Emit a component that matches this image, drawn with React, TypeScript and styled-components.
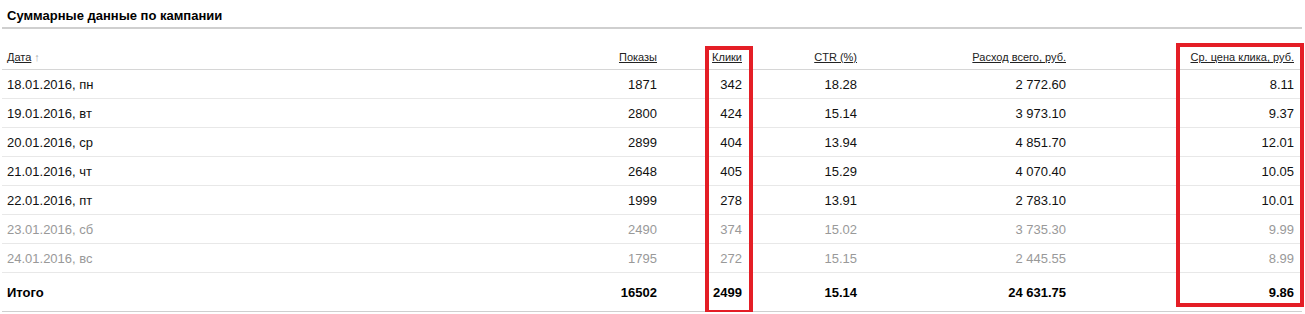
import * as React from 'react';
import styled, { createGlobalStyle } from 'styled-components';

const GlobalStyle = createGlobalStyle`
    body {
        margin: 0;
        background: #fff;
        font-family: "Liberation Sans", Arial, sans-serif;
        color: #000;
    }
`;

const Panel = styled.div`
    position: relative;
    width: 1300px;
    margin-left: 2px;
`;

const Title = styled.h2`
    margin: 0;
    height: 29px;
    padding-left: 5px;
    box-sizing: border-box;
    padding-top: 8px;
    font-size: 13px;
    font-weight: bold;
    line-height: 15px;
    border-bottom: 2px solid #cfcfcf;
`;

const Table = styled.table`
    width: 1300px;
    table-layout: fixed;
    border-collapse: collapse;
    font-size: 13px;
`;

const HeadCell = styled.th<{ $left?: boolean }>`
    height: 34px;
    padding: ${p => (p.$left ? '0 0 6px 5px' : '0 8px 6px 0')};
    vertical-align: bottom;
    text-align: ${p => (p.$left ? 'left' : 'right')};
    font-weight: normal;
    font-size: 11px;
    border-bottom: 1px solid #d6d6d6;
`;

const SortLink = styled.a`
    color: #222;
    text-decoration: underline;
    cursor: pointer;
`;

const Arrow = styled.span`
    color: #aaa;
    margin-left: 3px;
`;

const Row = styled.tr<{ $muted?: boolean }>`
    color: ${p => (p.$muted ? '#999' : '#111')};
`;

const Cell = styled.td<{ $left?: boolean }>`
    height: 28px;
    padding: ${p => (p.$left ? '0 0 0 5px' : '0 8px 0 0')};
    text-align: ${p => (p.$left ? 'left' : 'right')};
    border-bottom: 1px solid #e8e8e8;
    white-space: nowrap;
`;

const TotalCell = styled(Cell)`
    height: 38px;
    font-weight: bold;
    color: #000;
    border-bottom: 1px solid #cfcfcf;
`;

const Marker = styled.div<{ $left: number; $top: number; $w: number; $h: number }>`
    position: absolute;
    left: ${p => p.$left}px;
    top: ${p => p.$top}px;
    width: ${p => p.$w}px;
    height: ${p => p.$h}px;
    box-sizing: border-box;
    border: 4px solid #e41e26;
    pointer-events: none;
`;

const columns = [
    { title: 'Дата', width: 498 },
    { title: 'Показы', width: 165 },
    { title: 'Клики', width: 85 },
    { title: 'CTR (%)', width: 115 },
    { title: 'Расход всего, руб.', width: 209 },
    { title: 'Ср. цена клика, руб.', width: 228 },
];

const rows = [
    { date: '18.01.2016, пн', shows: '1871', clicks: '342', ctr: '18.28', cost: '2 772.60', cpc: '8.11' },
    { date: '19.01.2016, вт', shows: '2800', clicks: '424', ctr: '15.14', cost: '3 973.10', cpc: '9.37' },
    { date: '20.01.2016, ср', shows: '2899', clicks: '404', ctr: '13.94', cost: '4 851.70', cpc: '12.01' },
    { date: '21.01.2016, чт', shows: '2648', clicks: '405', ctr: '15.29', cost: '4 070.40', cpc: '10.05' },
    { date: '22.01.2016, пт', shows: '1999', clicks: '278', ctr: '13.91', cost: '2 783.10', cpc: '10.01' },
    { date: '23.01.2016, сб', shows: '2490', clicks: '374', ctr: '15.02', cost: '3 735.30', cpc: '9.99', weekend: true },
    { date: '24.01.2016, вс', shows: '1795', clicks: '272', ctr: '15.15', cost: '2 445.55', cpc: '8.99', weekend: true },
];

export default function App() {
    return (
        <Panel>
            <GlobalStyle />
            <Title>Суммарные данные по кампании</Title>
            <Table>
                <colgroup>
                    {columns.map(c => (
                        <col key={c.title} style={{ width: c.width }} />
                    ))}
                </colgroup>
                <thead>
                    <tr>
                        {columns.map((c, i) => (
                            <HeadCell key={c.title} $left={i === 0}>
                                <SortLink>{c.title}</SortLink>
                                {i === 0 && <Arrow>↑</Arrow>}
                            </HeadCell>
                        ))}
                    </tr>
                </thead>
                <tbody>
                    {rows.map(r => (
                        <Row key={r.date} $muted={r.weekend}>
                            <Cell $left>{r.date}</Cell>
                            <Cell>{r.shows}</Cell>
                            <Cell>{r.clicks}</Cell>
                            <Cell>{r.ctr}</Cell>
                            <Cell>{r.cost}</Cell>
                            <Cell>{r.cpc}</Cell>
                        </Row>
                    ))}
                    <Row>
                        <TotalCell $left>Итого</TotalCell>
                        <TotalCell>16502</TotalCell>
                        <TotalCell>2499</TotalCell>
                        <TotalCell>15.14</TotalCell>
                        <TotalCell>24 631.75</TotalCell>
                        <TotalCell>9.86</TotalCell>
                    </Row>
                </tbody>
            </Table>
            <Marker $left={703} $top={46} $w={48} $h={268} />
            <Marker $left={1174} $top={43} $w={128} $h={264} />
        </Panel>
    );
}
